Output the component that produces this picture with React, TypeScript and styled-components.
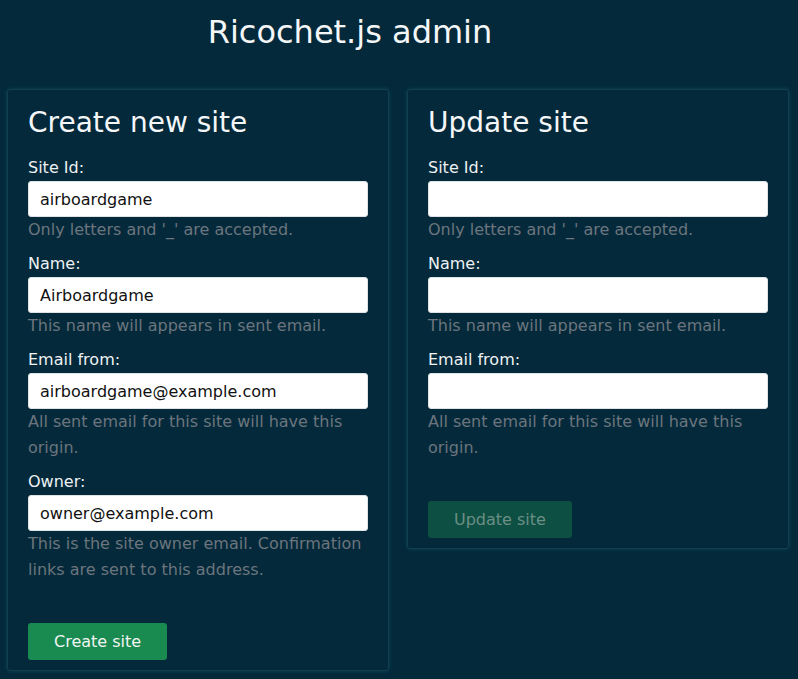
import React from 'react';
import styled, { createGlobalStyle } from 'styled-components';

const GlobalStyle = createGlobalStyle`
    body {
        margin: 0;
        background: #03293b;
        font-family: 'DejaVu Sans', 'Noto Sans', sans-serif;
        color: #f4f6f8;
    }
`;

const Page = styled.div`
    min-height: 679px;
`;

const Title = styled.h1`
    max-width: 700px;
    margin: 0;
    padding-top: 12px;
    height: 89px;
    box-sizing: border-box;
    text-align: center;
    font-size: 32px;
    font-weight: 400;
    line-height: 40px;
    color: #f4f6f8;
`;

const Columns = styled.div`
    display: grid;
    grid-template-columns: 382px 382px;
    column-gap: 18px;
    align-items: start;
    padding-left: 7px;
`;

const Card = styled.form`
    display: flex;
    flex-direction: column;
    padding: 16px 20px 10px;
    border: 1px solid #114150;
    border-radius: 3px;
    box-shadow: 0 0 4px rgba(30, 110, 120, 0.45);
`;

const CardTitle = styled.h2`
    margin: 0 0 15px;
    font-size: 28px;
    font-weight: 400;
    line-height: 34px;
    color: #f4f6f8;
`;

const Field = styled.div`
    display: flex;
    flex-direction: column;
    margin-bottom: 8px;
`;

const Label = styled.label`
    font-size: 16px;
    line-height: 26px;
    color: #eef1f3;
`;

const Input = styled.input`
    height: 36px;
    box-sizing: border-box;
    border: 1px solid #dfe3e6;
    border-radius: 3px;
    padding: 0 11px;
    background: #fff;
    font-family: 'DejaVu Sans', sans-serif;
    font-size: 16px;
    color: #111;
    outline: none;
`;

const Help = styled.div`
    font-size: 16px;
    line-height: 26px;
    color: #6c757d;
`;

const Button = styled.button<{ $disabled?: boolean }>`
    align-self: flex-start;
    margin-top: 32px;
    height: 37px;
    padding: 0 26px;
    border: none;
    border-radius: 3px;
    font-family: 'DejaVu Sans', sans-serif;
    font-size: 16px;
    background: ${(p) => (p.$disabled ? '#0d5043' : '#198a50')};
    color: ${(p) => (p.$disabled ? '#6b8e85' : '#f1f5f3')};
`;

type FieldDef = { label: string; value: string; help: string };

const createFields: FieldDef[] = [
    { label: 'Site Id:', value: 'airboardgame', help: "Only letters and '_' are accepted." },
    { label: 'Name:', value: 'Airboardgame', help: 'This name will appears in sent email.' },
    { label: 'Email from:', value: 'airboardgame@example.com', help: 'All sent email for this site will have this origin.' },
    { label: 'Owner:', value: 'owner@example.com', help: 'This is the site owner email. Confirmation links are sent to this address.' },
];

const updateFields: FieldDef[] = createFields.slice(0, 3).map((f) => ({ ...f, value: '' }));

function FormField({ field, id }: { field: FieldDef; id: string }) {
    return (
        <Field>
            <Label htmlFor={id}>{field.label}</Label>
            <Input id={id} defaultValue={field.value} />
            <Help>{field.help}</Help>
        </Field>
    );
}

export default function App() {
    return (
        <Page>
            <GlobalStyle />
            <Title>Ricochet.js admin</Title>
            <Columns>
                <Card onSubmit={(e) => e.preventDefault()}>
                    <CardTitle>Create new site</CardTitle>
                    {createFields.map((f, i) => (
                        <FormField key={f.label} field={f} id={`create-${i}`} />
                    ))}
                    <Button type="submit">Create site</Button>
                </Card>
                <Card onSubmit={(e) => e.preventDefault()}>
                    <CardTitle>Update site</CardTitle>
                    {updateFields.map((f, i) => (
                        <FormField key={f.label} field={f} id={`update-${i}`} />
                    ))}
                    <Button type="submit" $disabled disabled>
                        Update site
                    </Button>
                </Card>
            </Columns>
        </Page>
    );
}
